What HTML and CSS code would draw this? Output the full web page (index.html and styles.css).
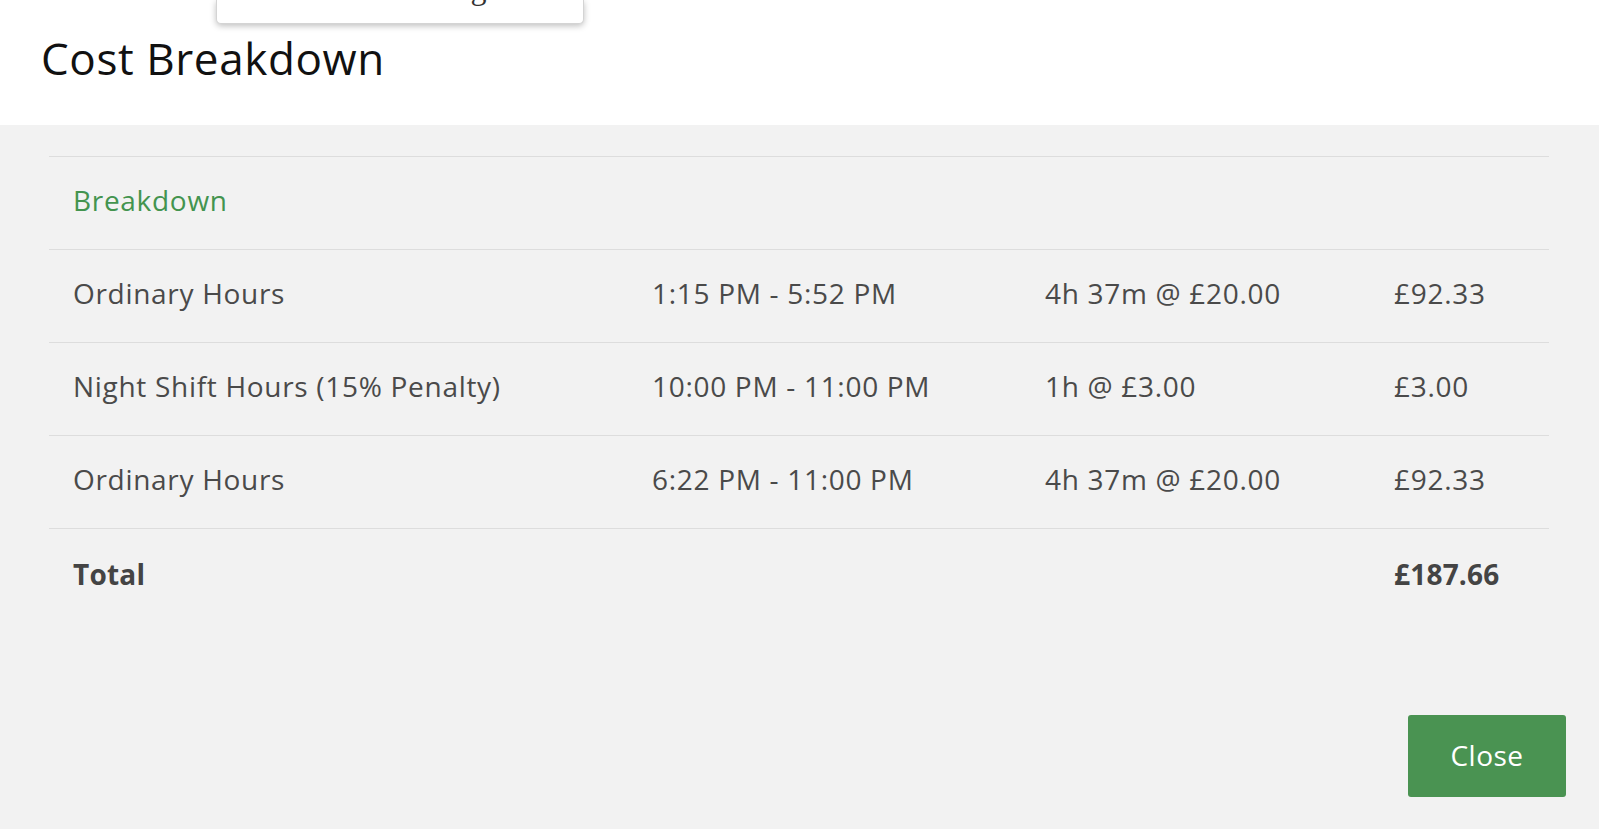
FILE: index.html
```html
<!DOCTYPE html>
<html lang="en">
<head>
  <meta charset="UTF-8"/>
  <title>Cost Breakdown</title>
  <link rel="stylesheet" href="styles.css">
</head>
<body>
  <!-- dropdown peeking in from above -->
  <div class="peek-menu">
    <span class="peek-text">Settings</span>
  </div>

  <div class="modal-header">
    <h1 class="modal-title">Cost Breakdown</h1>
  </div>

  <div class="modal-body">
    <div class="breakdown">
      <div class="row head">
        <div class="cell green">Breakdown</div>
      </div>
      <div class="row">
        <div class="cell">Ordinary Hours</div>
        <div class="cell">1:15 PM - 5:52 PM</div>
        <div class="cell">4h 37m @ £20.00</div>
        <div class="cell">£92.33</div>
      </div>
      <div class="row">
        <div class="cell">Night Shift Hours (15% Penalty)</div>
        <div class="cell">10:00 PM - 11:00 PM</div>
        <div class="cell">1h @ £3.00</div>
        <div class="cell">£3.00</div>
      </div>
      <div class="row">
        <div class="cell">Ordinary Hours</div>
        <div class="cell">6:22 PM - 11:00 PM</div>
        <div class="cell">4h 37m @ £20.00</div>
        <div class="cell">£92.33</div>
      </div>
      <div class="row total">
        <div class="cell">Total</div>
        <div class="cell"></div>
        <div class="cell"></div>
        <div class="cell">£187.66</div>
      </div>
    </div>

    <div class="modal-footer">
      <button class="close-btn" type="button">Close</button>
    </div>
  </div>
</body>
</html>
```

FILE: styles.css
```css
/* page */
html, body {
  height: 100%;
}
body {
  margin: 0;
  background: #fff;
  font-family: "Open Sans", "Noto Sans", sans-serif;
  color: #4a4a4a;
  display: flex;
  flex-direction: column;
}

/* dropdown that sits over the header */
.peek-menu {
  position: absolute;
  left: 216px;
  top: 0;
  width: 368px;
  height: 24px;
  background: #fff;
  border: 1px solid #d4d4d4;
  border-top: none;
  border-radius: 0 0 5px 5px;
  box-shadow: 0 2px 6px rgba(0, 0, 0, 0.25);
  overflow: hidden;
  box-sizing: border-box;
}
.peek-text {
  position: absolute;
  right: 84px;
  bottom: 16px;
  font-family: "Liberation Serif", serif;
  font-size: 32px;
  line-height: 1;
  color: #333;
  transform: translateY(-3px);
}

/* header */
.modal-header {
  height: 125px;
  box-sizing: border-box;
  padding: 28px 0 0 41px;
}
.modal-title {
  margin: 0;
  font-size: 44px;
  font-weight: 400;
  letter-spacing: 0.6px;
  line-height: 60px;
  color: #111;
}

/* body */
.modal-body {
  flex: 1;
  background: #f2f2f2;
  padding: 31px 33px 32px 49px;
  display: flex;
  flex-direction: column;
}

.breakdown {
  width: 1500px;
}

.row {
  display: grid;
  grid-template-columns: 579px 393px 349px 1fr;
  height: 93px;
  box-sizing: border-box;
  border-top: 1px solid #dddddd;
  align-items: center;
}

.cell {
  padding: 0 0 6px 24px;
  font-size: 28px;
  letter-spacing: 0.7px;
  white-space: nowrap;
}

.green {
  color: #43944f;
}

.total .cell {
  font-weight: 700;
  color: #444;
  letter-spacing: 0.2px;
  padding-bottom: 2px;
}

.modal-footer {
  margin-top: auto;
  display: flex;
  justify-content: flex-end;
}

.close-btn {
  width: 158px;
  height: 82px;
  padding-bottom: 4px;
  background: #4a9352;
  color: #fff;
  border: none;
  border-radius: 3px;
  font-family: "Open Sans", "Noto Sans", sans-serif;
  font-size: 28px;
  letter-spacing: 0.5px;
  cursor: pointer;
}
```
